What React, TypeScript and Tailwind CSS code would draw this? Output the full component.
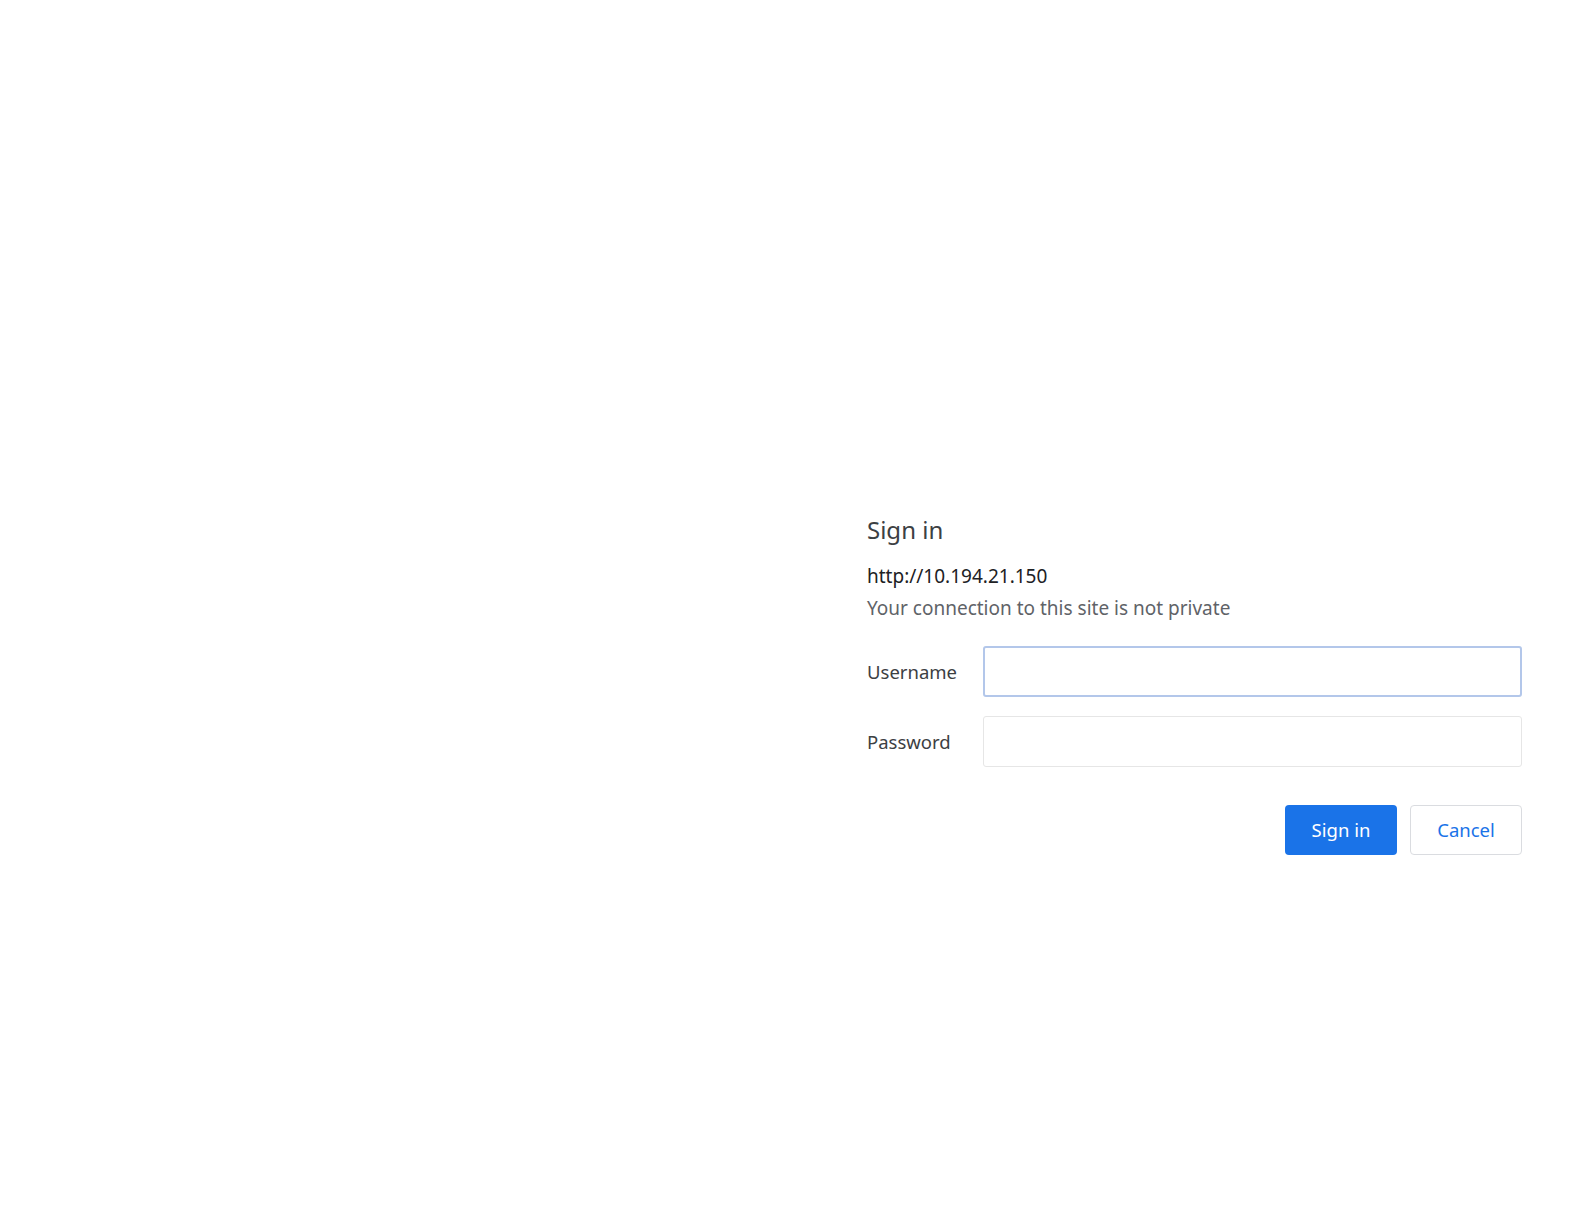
import React from 'react';

const font = { fontFamily: '"Noto Sans", "Open Sans", sans-serif' };

const App: React.FC = () => {
  return (
    <div className="min-h-[1224px] w-full bg-white" style={font}>
      <div className="ml-[867px] w-[655px] pt-[510px]">
        <h1 className="text-[24px] leading-[40px] text-[#3c4043]">Sign in</h1>
        <div className="mt-[11px] text-[19px] leading-[30px] text-[#202124]">http://10.194.21.150</div>
        <div className="mt-[2px] text-[19px] leading-[30px] text-[#5f6368]">Your connection to this site is not private</div>

        <div className="mt-[23px] flex flex-col gap-[19px]">
          <label className="flex items-center">
            <span className="w-[116px] text-[18.5px] text-[#3c4043]">Username</span>
            <input
              type="text"
              autoFocus
              className="h-[51px] flex-1 rounded-[3px] border-2 border-[#b3c7ea] bg-white px-3 text-[18px] outline-none"
            />
          </label>
          <label className="flex items-center">
            <span className="w-[116px] text-[18.5px] text-[#3c4043]">Password</span>
            <input
              type="password"
              className="h-[51px] flex-1 rounded-[3px] border border-[#e6e6e6] bg-white px-3 text-[18px] outline-none"
            />
          </label>
        </div>

        <div className="mt-[38px] flex justify-end gap-[13px]">
          <button className="h-[50px] w-[112px] rounded-[4px] bg-[#1a73e8] text-[18.5px] text-white">Sign in</button>
          <button className="h-[50px] w-[112px] rounded-[4px] border border-[#dadce0] bg-white text-[18.5px] text-[#1a73e8]">
            Cancel
          </button>
        </div>
      </div>
    </div>
  );
};

export default App;
